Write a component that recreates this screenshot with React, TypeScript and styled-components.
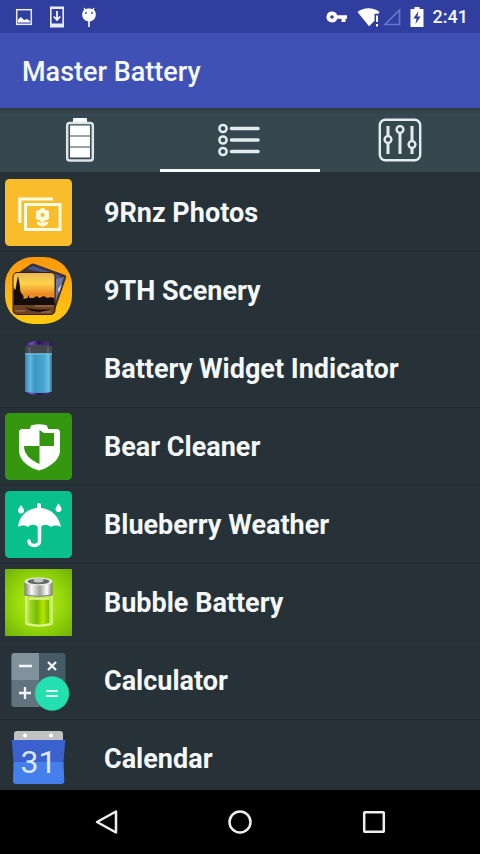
import React from 'react';
import styled, { createGlobalStyle, css } from 'styled-components';

const GlobalStyle = createGlobalStyle`
  *, *::before, *::after { box-sizing: border-box; }
  body { margin: 0; background: #263238; }
  button { font: inherit; color: inherit; background: none; border: 0; padding: 0; cursor: pointer; }
  svg { display: block; flex: none; }
`;

const Screen = styled.div`
  display: flex;
  flex-direction: column;
  height: 100vh;
  background: #263138;
  color: #f4f8fa;
  font-family: Roboto, 'Liberation Sans', sans-serif;
`;

const StatusBar = styled.div`
  display: flex;
  flex: none;
  justify-content: space-between;
  align-items: center;
  height: 33px;
  padding: 0 12px 0 15px;
  background: #303f9f;
`;

const StatusGroup = styled.div<{ $gap: number }>`
  display: flex;
  align-items: center;
  gap: ${({ $gap }) => $gap}px;
`;

const Clock = styled.time`
  font-size: 18px;
  line-height: 24px;
  font-weight: 500;
`;

const AppBar = styled.header`
  display: flex;
  flex: none;
  align-items: center;
  height: 75px;
  padding: 2px 22px 0;
  background: #3f51b5;
`;

const Title = styled.h1`
  margin: 0;
  font-size: 27px;
  line-height: 36px;
  font-weight: 500;
`;

const Tabs = styled.div`
  display: grid;
  flex: none;
  grid-template-columns: repeat(3, 1fr);
  height: 64px;
  background: linear-gradient(#2d3a42, #37474f 6px);
`;

const Tab = styled.button<{ $active: boolean }>`
  display: flex;
  align-items: center;
  justify-content: center;
  border-top: 3px solid transparent;
  border-bottom: 3px solid transparent;
  ${({ $active }) => $active && css`border-bottom-color: #f5fafa;`}
`;

const AppList = styled.ul`
  flex: 1;
  min-height: 0;
  margin: 0;
  padding: 2px 0 0;
  list-style: none;
  overflow-y: auto;
  scrollbar-width: none;
`;

const AppItem = styled.li`
  border-bottom: 1px solid #212c32;
`;

const AppButton = styled.button`
  display: flex;
  align-items: center;
  gap: 32px;
  width: 100%;
  height: 77px;
  padding: 0 5px;
  text-align: left;
`;

const AppName = styled.span`
  font-size: 27px;
  line-height: 36px;
  font-weight: 700;
`;

const NavBar = styled.nav`
  display: flex;
  flex: none;
  justify-content: center;
  height: 64px;
  background: #000;
`;

const NavButton = styled.button`
  display: flex;
  align-items: center;
  justify-content: center;
  width: 28%;
`;

const PictureIcon = () => (
  <svg width="18" height="18" viewBox="0 0 18 18" fill="none">
    <rect x="1.7" y="1.7" width="14.6" height="14.6" stroke="#e8ecff" strokeWidth="1.5" />
    <path d="M3 14V11.5L6 9l3 3 3-1 3 2v1.5H3z" fill="#fff" />
  </svg>
);

const DownloadIcon = () => (
  <svg width="16" height="22" viewBox="0 0 16 22" fill="none">
    <path fillRule="evenodd" d="M1 .5h14v21H1zM2.6 3v14.5h10.8V3z" fill="#e8ecff" />
    <path d="M8 5v8M4.8 10.5 8 14l3.2-3.5" stroke="#fff" strokeWidth="1.7" />
  </svg>
);

const DroidIcon = () => (
  <svg width="16" height="22" viewBox="0 0 16 22">
    <path d="m3 2 2 3M13 2l-2 3" stroke="#fff" strokeWidth="1.3" />
    <path d="M8 14v7" stroke="#e8ecff" strokeWidth="1.8" />
    <path d="M8 2.5c4 0 6.8 2 6.8 6 0 4-3 7-6.8 7s-6.800-3-6.800-7c0-4 2.800-6 6.800-6z" fill="#fff" />
    <circle cx="5" cy="7" r="0.9" fill="#303f9f" />
    <circle cx="11" cy="7" r="0.9" fill="#303f9f" />
  </svg>
);

const KeyIcon = () => (
  <svg width="22" height="14" viewBox="0 0 22 14">
    <path fillRule="evenodd" fill="#fff" d="M6 1.500a5.500 5.500 0 0 1 5.200 3.700H21v3.600H19.500v3.200H15.500V8.800h-4.300A5.500 5.500 0 1 1 6 1.500zm0 3.700a1.800 1.800 0 1 0 0 3.600 1.800 1.800 0 0 0 0-3.600z" />
  </svg>
);

const WifiIcon = () => (
  <svg width="24" height="20" viewBox="0 0 24 20">
    <path d="M.5 5C6.500 0 16.500 0 22.500 5L21.500 6.800H17.500v7L12 19.300z" fill="#fff" />
    <path d="M20 8.500v6.500M20 17v2.500" stroke="#fff" strokeWidth="2" />
  </svg>
);

const SignalIcon = () => (
  <svg width="18" height="18" viewBox="0 0 18 18" fill="none">
    <path d="M16.500 2v14.500H2z" stroke="#6875cc" strokeWidth="1.700" />
  </svg>
);

const ChargingIcon = () => (
  <svg width="14" height="20" viewBox="0 0 14 20">
    <path d="M4.500 0h5v2H13.500v18H.5V2h4z" fill="#fff" />
    <path d="M8.500 4 3.300 11.500H6.500L5.500 17l5.200-7.500H7.500z" fill="#303f9f" />
  </svg>
);

const BatteryTabIcon = () => (
  <svg width="30" height="44" viewBox="0 0 30 44">
    <rect x="8" y="0" width="14" height="6" rx="1" fill="#fff" />
    <rect x="2.200" y="5" width="25.600" height="37.500" rx="2.500" fill="#37474f" stroke="#dce5e9" strokeWidth="2.500" />
    <path d="M5 7.500h20v10H5zM5 18.500h20v10H5zM5 29.500h20v10H5z" fill="#fff" />
  </svg>
);

const ListTabIcon = () => (
  <svg width="44" height="34" viewBox="0 0 44 34" fill="none" stroke="#e3edf0">
    <g strokeWidth="2.500">
      <circle cx="5" cy="5.500" r="3.600" />
      <circle cx="5" cy="17" r="3.600" />
      <circle cx="5" cy="28.500" r="3.600" />
    </g>
    <path d="M13.500 5.500h26.500M13.500 17h26.500M13.500 28.500h26.500" strokeWidth="3.600" strokeLinecap="round" />
  </svg>
);

const SlidersTabIcon = () => (
  <svg width="44" height="44" viewBox="0 0 44 44" fill="none" stroke="#e3edf0" strokeWidth="2.400">
    <rect x="1.800" y="1.800" width="40.400" height="40.400" rx="5.500" />
    <path d="M10 8v10M10 25v11M22 15v21M34 8v15M34 30v6" strokeWidth="3" />
    <circle cx="10" cy="21.500" r="3.400" />
    <circle cx="22" cy="11.500" r="3.400" />
    <circle cx="34" cy="26.500" r="3.400" />
  </svg>
);

const PhotosIcon = () => (
  <svg width="67" height="67" viewBox="0 0 67 67" fill="none">
    <rect width="67" height="67" rx="4.500" fill="#f9bc2a" />
    <path d="M14.800 44V20H48" stroke="#fffbe0" strokeWidth="3.200" />
    <rect x="20.500" y="25.500" width="34.500" height="25" stroke="#fffbe0" strokeWidth="3" />
    <g fill="#fffbe0">
      <circle cx="37.500" cy="31.800" r="2.900" />
      <circle cx="41.300" cy="34" r="2.900" />
      <circle cx="41.300" cy="38" r="2.900" />
      <circle cx="37.500" cy="40" r="2.900" />
      <circle cx="33.700" cy="38" r="2.900" />
      <circle cx="33.700" cy="34" r="2.900" />
      <path d="M31.500 43c3-.5 5 .5 6 2.500 1-2 3-3 6-2.500-.5 3-3 4-6 4s-5.500-1-6-4z" />
    </g>
    <path d="M37.500 40v8" stroke="#fffbe0" strokeWidth="1.500" />
    <circle cx="37.500" cy="36" r="2" fill="#f9bc2a" />
  </svg>
);

const SceneryIcon = () => (
  <svg width="67" height="67" viewBox="0 0 67 67">
    <defs>
      <linearGradient id="scenery-bg" x1="0" y1="0" x2="0" y2="1">
        <stop offset="0" stopColor="#fb980e" />
        <stop offset="1" stopColor="#ffcb12" />
      </linearGradient>
      <linearGradient id="scenery-sky" x1="0" y1="0" x2="0" y2="1">
        <stop offset="0" stopColor="#e8b556" />
        <stop offset=".35" stopColor="#ffd24a" />
        <stop offset=".7" stopColor="#ec8a24" />
      </linearGradient>
    </defs>
    <rect width="67" height="67" rx="28" fill="url(#scenery-bg)" />
    <path d="M13 16 26 7q2-1 4 0l30 11q2 1 1 3L49 56q-1 2-4 2z" fill="#3b3138" />
    <path d="m22 12 6-3 28 10-3 4-12-7z" fill="#4b558c" />
    <path d="m51 22 8-2-9 27z" fill="#6e78a8" />
    <path d="m53 32 4-5-3 9z" fill="#d5d3e8" />
    <rect x="7.500" y="15" width="43" height="43" rx="5" fill="#3a1d11" />
    <path d="M8.500 20q0-4 4-4h33q4 0 4 4v26h-41z" fill="url(#scenery-sky)" />
    <path d="M8.500 48V31l2 2 1-7 1.500-7 1.500 7 1 9 3 4v3l4-1 1-3 1 3h4l3-2 3 2 4-2 4 2 3-1 4 1v7z" fill="#150d0c" />
    <path d="M8.500 48h41v4q0 5-4 5h-33q-4 0-4-5z" fill="#6b4228" />
    <path d="M10 54h10M30 49h18M36 55h10" stroke="#a97a48" />
    <path d="M20 50c8 3 17 3 25 2-6 4-18 4-25-2z" fill="#120b0a" />
  </svg>
);

const WidgetIcon = () => (
  <svg width="67" height="67" viewBox="0 0 67 67">
    <defs>
      <linearGradient id="widget-fill">
        <stop offset="0" stopColor="#2f86ad" />
        <stop offset=".2" stopColor="#65b9de" />
        <stop offset=".35" stopColor="#3d97c0" />
        <stop offset=".7" stopColor="#46a8d2" />
        <stop offset=".87" stopColor="#70c0e0" />
        <stop offset="1" stopColor="#2a7598" />
      </linearGradient>
      <linearGradient id="widget-cap">
        <stop offset="0" stopColor="#241651" />
        <stop offset=".25" stopColor="#7350c5" />
        <stop offset=".5" stopColor="#291347" />
        <stop offset=".85" stopColor="#4a2f86" />
        <stop offset="1" stopColor="#201332" />
      </linearGradient>
    </defs>
    <path d="M20 12V9.500c0-1.500 5-2.500 7-2.500 2-2 11-2 13 0 3 0 7 1 7 2.500V12z" fill="url(#widget-cap)" />
    <path d="M20 11q13-3 27 0v9H20z" fill="#42454c" />
    <path d="M24.500 12v8M43 12v8" stroke="#5d6068" strokeWidth="2" />
    <path d="M20 54h27v3q-5 3-14 3t-13-3z" fill="url(#widget-cap)" />
    <path d="M20 18.500h27V57q-13 2-27 0z" fill="url(#widget-fill)" />
    <path d="M20 19h27" stroke="#69bbdb" strokeWidth="1.500" />
  </svg>
);

const ShieldIcon = () => (
  <svg width="67" height="67" viewBox="0 0 67 67">
    <rect width="67" height="67" rx="4.500" fill="#35970f" />
    <path d="M26 12.500q8-2.500 16 0l1 3.500h10l2 2v19c0 9-7 14-15 18.500l-6 2-6-2C20 51 14 46 14 37V18l2-2h9z" fill="#fff" />
    <path d="M34.500 17 39 20h10v13H34.500zM19 33h15.500v18C26 47 19 42 19 33z" fill="#35970f" />
  </svg>
);

const UmbrellaIcon = () => (
  <svg width="67" height="67" viewBox="0 0 67 67">
    <rect width="67" height="67" rx="4.500" fill="#09bf8c" />
    <g fill="#fff">
      <path d="M32 17v-3q0-2 2-2t2 2v3c11 1 18 9 20 19-3-2-7-2-10 0-4-3-8-3-10 0h-3c-3-3-7-3-10 0-3-2-7-2-10 0 1-10 8-18 19-19z" />
      <path d="M16 14q3 4 3 5.500a3 3 0 0 1-6 0Q13 18 16 14zM53.500 12.500q3 4 3 5.500a3 3 0 0 1-6 0q0-1.500 3-5.500z" />
    </g>
    <path d="M34.500 33v17c0 6-10.500 6-10.500 0" fill="none" stroke="#fff" strokeWidth="3.500" strokeLinecap="round" />
  </svg>
);

const BubbleIcon = () => (
  <svg width="67" height="67" viewBox="0 0 67 67">
    <defs>
      <radialGradient id="bubble-bg" r=".7">
        <stop offset="0" stopColor="#c4ed1d" />
        <stop offset=".55" stopColor="#94d60b" />
        <stop offset="1" stopColor="#6fb204" />
      </radialGradient>
      <linearGradient id="bubble-cap">
        <stop offset="0" stopColor="#777a77" />
        <stop offset=".25" stopColor="#f8f8f8" />
        <stop offset=".55" stopColor="#9a9f98" />
        <stop offset=".8" stopColor="#fff" />
        <stop offset="1" stopColor="#737970" />
      </linearGradient>
      <linearGradient id="bubble-liquid">
        <stop offset="0" stopColor="#a5dc31" />
        <stop offset=".4" stopColor="#75bd00" />
        <stop offset=".7" stopColor="#b7e600" />
        <stop offset="1" stopColor="#77b900" />
      </linearGradient>
    </defs>
    <rect width="67" height="67" fill="url(#bubble-bg)" />
    <path d="M21 26h26v29q-13 4-26 0z" fill="#c6ec62" fillOpacity=".65" stroke="#d8f395" strokeWidth="1.500" />
    <path d="M24 30h20v24q-10 3-20 0z" fill="url(#bubble-liquid)" />
    <path d="M24 30h20M23 55q11 3 22 0" fill="none" stroke="#e4f28f" strokeWidth="1.500" />
    <path d="M19.500 12.500h28V26q-14 3-28 0z" fill="url(#bubble-cap)" />
    <ellipse cx="33.500" cy="12.500" rx="14" ry="4" fill="#e8ebe7" />
    <ellipse cx="33.500" cy="12.500" rx="11" ry="2.700" fill="#63695f" />
    <ellipse cx="33.500" cy="11.500" rx="5" ry="2" fill="#c4c8c5" />
    <path d="M19.500 26q14 3 28 0" fill="none" stroke="#788174" />
  </svg>
);

const CalculatorIcon = () => (
  <svg width="67" height="67" viewBox="0 0 67 67">
    <rect x="6.500" y="6" width="54" height="54" rx="3" fill="#465b65" />
    <path d="M9.500 6H34v27H6.500V9q0-3 3-3z" fill="#82929c" />
    <path d="M6.500 33H34v27H9.500q-3 0-3-3z" fill="#61747e" />
    <path d="M14 19h13M14 46h12M20 40v12M43 15l8 8M51 15l-8 8" fill="none" stroke="#f3f6f7" strokeWidth="2.300" />
    <circle cx="47" cy="46.500" r="17" fill="#24e0b1" stroke="#28bd9b" strokeWidth=".5" />
    <path d="M41 44h12M41 49h12" stroke="#e4fff7" strokeWidth="2" />
  </svg>
);

const CalendarText = styled.text`
  font-family: Roboto, sans-serif;
  font-size: 32px;
  font-weight: 400;
  text-anchor: middle;
`;

const CalendarIcon = () => (
  <svg width="67" height="67" viewBox="0 0 67 67">
    <path d="M12 6h43q3 0 3 3v10H9V9q0-3 3-3z" fill="#bfc1c2" />
    <circle cx="20" cy="10.500" r="2" fill="#fff" />
    <circle cx="46" cy="10.500" r="2" fill="#fff" />
    <path d="M6.500 15h54q-.5 2-1 10l-1 12h-50l-1-12q-.5-8-1-10z" fill="#3a61ce" />
    <path d="M8.500 37h50l.8 19q0 3-3 3H11q-3 0-3-3z" fill="#447fec" />
    <CalendarText x="33.500" y="48" fill="#dce8ff">31</CalendarText>
  </svg>
);

const tabs = [
  { label: 'Battery', Icon: BatteryTabIcon },
  { label: 'Apps', Icon: ListTabIcon },
  { label: 'Settings', Icon: SlidersTabIcon },
];

const apps = [
  { name: '9Rnz Photos', Icon: PhotosIcon },
  { name: '9TH Scenery', Icon: SceneryIcon },
  { name: 'Battery Widget Indicator', Icon: WidgetIcon },
  { name: 'Bear Cleaner', Icon: ShieldIcon },
  { name: 'Blueberry Weather', Icon: UmbrellaIcon },
  { name: 'Bubble Battery', Icon: BubbleIcon },
  { name: 'Calculator', Icon: CalculatorIcon },
  { name: 'Calendar', Icon: CalendarIcon },
];

export default function App() {
  const [active, setActive] = React.useState(1);
  return (
    <Screen>
      <GlobalStyle />
      <StatusBar>
        <StatusGroup $gap={16}>
          <PictureIcon />
          <DownloadIcon />
          <DroidIcon />
        </StatusGroup>
        <StatusGroup $gap={9}>
          <KeyIcon />
          <StatusGroup $gap={2}>
            <WifiIcon />
            <SignalIcon />
          </StatusGroup>
          <ChargingIcon />
          <Clock>2:41</Clock>
        </StatusGroup>
      </StatusBar>
      <AppBar>
        <Title>Master Battery</Title>
      </AppBar>
      <Tabs role="tablist">
        {tabs.map(({ label, Icon }, i) => (
          <Tab
            key={label}
            type="button"
            role="tab"
            aria-label={label}
            aria-selected={active === i}
            $active={active === i}
            onClick={() => setActive(i)}
          >
            <Icon />
          </Tab>
        ))}
      </Tabs>
      <AppList>
        {apps.map(({ name, Icon }) => (
          <AppItem key={name}>
            <AppButton type="button">
              <Icon />
              <AppName>{name}</AppName>
            </AppButton>
          </AppItem>
        ))}
      </AppList>
      <NavBar>
        <NavButton type="button" aria-label="Back">
          <svg width="24" height="26" viewBox="0 0 24 26" fill="none">
            <path d="M22 2.500v21L3 13z" stroke="#eee" strokeWidth="2.500" strokeLinejoin="round" />
          </svg>
        </NavButton>
        <NavButton type="button" aria-label="Home">
          <svg width="24" height="24" viewBox="0 0 24 24" fill="none">
            <circle cx="12" cy="12" r="10.500" stroke="#eee" strokeWidth="2.500" />
          </svg>
        </NavButton>
        <NavButton type="button" aria-label="Recent apps">
          <svg width="24" height="24" viewBox="0 0 24 24" fill="none">
            <rect x="2.200" y="2.200" width="19.600" height="19.600" rx=".5" stroke="#eee" strokeWidth="2.500" />
          </svg>
        </NavButton>
      </NavBar>
    </Screen>
  );
}
